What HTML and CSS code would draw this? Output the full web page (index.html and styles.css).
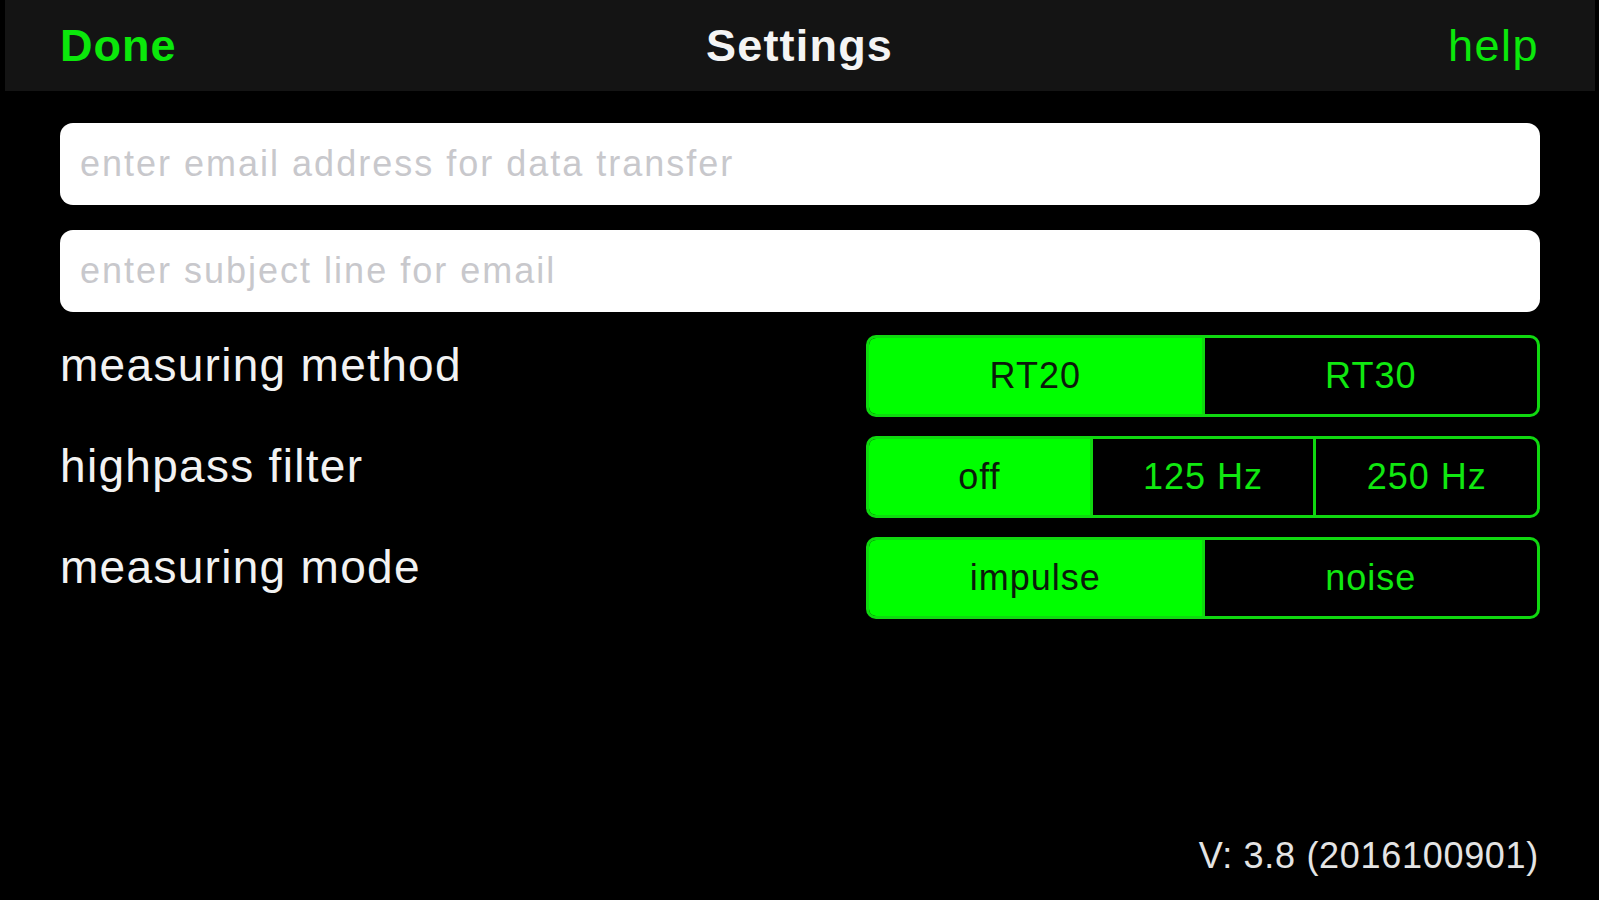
FILE: index.html
```html
<!DOCTYPE html>
<html>
<head>
<meta charset="utf-8">
<link rel="stylesheet" href="styles.css">
</head>
<body>
<div class="app">
  <header class="navbar">
    <span class="nav-btn left">Done</span>
    <span class="nav-title">Settings</span>
    <span class="nav-btn right">help</span>
  </header>
  <main class="content">
    <div class="fields">
      <div class="field"><span class="placeholder">enter email address for data transfer</span></div>
      <div class="field"><span class="placeholder">enter subject line for email</span></div>
    </div>
    <div class="rows">
      <div class="row">
        <span class="label">measuring method</span>
        <div class="segmented">
          <span class="seg selected">RT20</span>
          <span class="seg">RT30</span>
        </div>
      </div>
      <div class="row">
        <span class="label">highpass filter</span>
        <div class="segmented">
          <span class="seg selected">off</span>
          <span class="seg">125 Hz</span>
          <span class="seg">250 Hz</span>
        </div>
      </div>
      <div class="row">
        <span class="label">measuring mode</span>
        <div class="segmented">
          <span class="seg selected">impulse</span>
          <span class="seg">noise</span>
        </div>
      </div>
    </div>
  </main>
  <footer class="version">V: 3.8 (2016100901)</footer>
</div>
</body>
</html>
```
FILE: styles.css
```css
html, body {
  margin: 0;
  padding: 0;
  background: #000;
}
body {
  font-family: "Liberation Sans", Arial, sans-serif;
  color: #fff;
}
.app {
  display: flex;
  flex-direction: column;
  height: 900px;
  overflow: hidden;
}
.navbar {
  margin: 0 4px 0 5px;
  height: 91px;
  background: #141414;
  display: grid;
  grid-template-columns: 1fr auto 1fr;
  align-items: center;
  padding: 0 56px 0 55px;
}
.nav-btn {
  color: #0be80b;
  font-size: 45px;
}
.nav-btn.left { justify-self: start; font-weight: 600; letter-spacing: 1px; }
.nav-btn.right { justify-self: end; letter-spacing: 1.5px; }
.nav-title {
  font-size: 45px;
  font-weight: bold;
  color: #f4f4f4;
  letter-spacing: 1.2px;
}
.content {
  padding: 32px 59px 0 60px;
  display: flex;
  flex-direction: column;
  gap: 23px;
}
.fields {
  display: flex;
  flex-direction: column;
  gap: 25px;
}
.field {
  height: 82px;
  background: #fff;
  border-radius: 13px;
  display: flex;
  align-items: center;
  padding: 0 20px;
}
.placeholder {
  color: #c8c8cc;
  font-size: 36px;
  letter-spacing: 2px;
}
.rows {
  display: flex;
  flex-direction: column;
  gap: 19px;
}
.row {
  display: flex;
  justify-content: space-between;
  align-items: flex-start;
}
.label {
  font-size: 46px;
  line-height: 60px;
  color: #f2f2f2;
  letter-spacing: 1.3px;
}
.segmented {
  width: 674px;
  height: 82px;
  box-sizing: border-box;
  border: 3px solid #10d810;
  border-radius: 10px;
  display: flex;
  overflow: hidden;
}
.seg {
  flex: 1;
  display: flex;
  align-items: center;
  justify-content: center;
  font-size: 36px;
  letter-spacing: 1px;
  color: #10e810;
}
.seg + .seg { border-left: 3px solid #10d810; }
.seg.selected {
  background: #00ff00;
  color: #0b1a0b;
}
.version {
  margin-top: auto;
  align-self: flex-end;
  margin-right: 60px;
  margin-bottom: 22px;
  font-size: 36px;
  line-height: 44px;
  color: #e4e4e4;
  letter-spacing: 0.7px;
}
```
